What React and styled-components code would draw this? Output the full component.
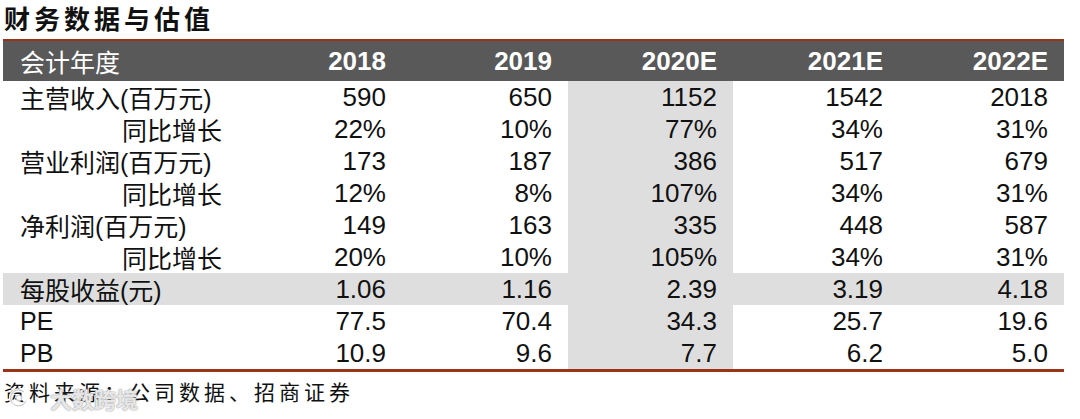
import React from 'react';
import styled, { createGlobalStyle } from 'styled-components';

const GlobalStyle = createGlobalStyle`
    body {
        margin: 0;
        background: #ffffff;
    }
`;

const Page = styled.div`
    position: relative;
    width: 1080px;
    height: 419px;
    overflow: hidden;
    background: #ffffff;
`;

const Title = styled.h1`
    margin: 0;
    height: 39px;
    padding-left: 4px;
    line-height: 36px;
    font-family: "Noto Sans CJK SC", sans-serif;
    font-weight: 700;
    font-size: 26px;
    letter-spacing: 4px;
    color: #111111;
`;

const Table = styled.div`
    margin-left: 3px;
    width: 1061px;
    display: grid;
    grid-template-columns: 233px 166px 166px 165px 166px 165px;
    border-top: 2px solid #9a3418;
    border-bottom: 3px solid #9a3418;
`;

const HeadCell = styled.div`
    height: 40px;
    background: #595959;
    color: #ffffff;
    display: flex;
    align-items: center;
    justify-content: ${p => (p.$label ? 'flex-start' : 'flex-end')};
    padding: ${p => (p.$label ? '0 0 0 17px' : '0 16px 0 0')};
    font-family: ${p => (p.$label
        ? '"Noto Sans CJK SC", sans-serif'
        : '"Liberation Sans", Arial, sans-serif')};
    font-weight: ${p => (p.$label ? 400 : 700)};
    font-size: ${p => (p.$label ? '25px' : '26px')};
`;

const Cell = styled.div`
    height: 32px;
    background: ${p => (p.$shade ? '#dedede' : '#ffffff')};
    color: #111111;
    display: flex;
    align-items: center;
    justify-content: ${p => (p.$label ? 'flex-start' : 'flex-end')};
    padding: ${p => (p.$label ? `0 0 0 ${p.$indent ? 119 : 17}px` : '0 16px 0 0')};
    font-family: ${p => (p.$label
        ? '"Liberation Sans", Arial, "Noto Sans CJK SC", sans-serif'
        : '"Liberation Sans", Arial, sans-serif')};
    font-size: ${p => (p.$label ? '25px' : '26px')};
    white-space: nowrap;
`;

const Source = styled.div`
    padding: 4px 0 0 4px;
    font-family: "Noto Sans CJK SC", sans-serif;
    font-size: 21px;
    letter-spacing: 4px;
    color: #111111;
`;

const Watermark = styled.div`
    position: absolute;
    left: 8px;
    top: 386px;
    display: flex;
    align-items: center;
    gap: 20px;
    line-height: 24px;
    color: rgba(255, 255, 255, 0.8);
    font-family: "Noto Sans CJK SC", sans-serif;
    font-weight: 700;
    font-size: 22px;
    text-shadow: 0 0 1px #8f8f8f, 0 0 2px #a8a8a8;
`;

const years = ['2018', '2019', '2020E', '2021E', '2022E'];

const rows = [
    { label: '主营收入(百万元)', values: ['590', '650', '1152', '1542', '2018'] },
    { label: '同比增长', indent: true, values: ['22%', '10%', '77%', '34%', '31%'] },
    { label: '营业利润(百万元)', values: ['173', '187', '386', '517', '679'] },
    { label: '同比增长', indent: true, values: ['12%', '8%', '107%', '34%', '31%'] },
    { label: '净利润(百万元)', values: ['149', '163', '335', '448', '587'] },
    { label: '同比增长', indent: true, values: ['20%', '10%', '105%', '34%', '31%'] },
    { label: '每股收益(元)', shade: true, values: ['1.06', '1.16', '2.39', '3.19', '4.18'] },
    { label: 'PE', values: ['77.5', '70.4', '34.3', '25.7', '19.6'] },
    { label: 'PB', values: ['10.9', '9.6', '7.7', '6.2', '5.0'] },
];

const Logo = () => (
    <svg width="22" height="22" viewBox="0 0 22 22">
        <path d="M16 5 A8 8 0 1 0 18 14" fill="none" stroke="rgba(255,255,255,0.9)" strokeWidth="3.5" strokeLinecap="round" />
        <path d="M16 5 A8 8 0 1 0 18 14" fill="none" stroke="#a8a8a8" strokeWidth="0.7" />
        <circle cx="11" cy="11" r="3" fill="rgba(255,255,255,0.9)" stroke="#a8a8a8" strokeWidth="0.6" />
    </svg>
);

export default function App() {
    return (
        <Page>
            <GlobalStyle />
            <Title>财务数据与估值</Title>
            <Table>
                <HeadCell $label>会计年度</HeadCell>
                {years.map(y => <HeadCell key={y}>{y}</HeadCell>)}
                {rows.map((r, i) => (
                    <React.Fragment key={i}>
                        <Cell $label $indent={r.indent} $shade={r.shade}>{r.label}</Cell>
                        {r.values.map((v, j) => (
                            <Cell key={j} $shade={r.shade || j === 2}>{v}</Cell>
                        ))}
                    </React.Fragment>
                ))}
            </Table>
            <Source>资料来源：公司数据、招商证券</Source>
            <Watermark>
                <Logo />
                <span>大数跨境</span>
            </Watermark>
        </Page>
    );
}
